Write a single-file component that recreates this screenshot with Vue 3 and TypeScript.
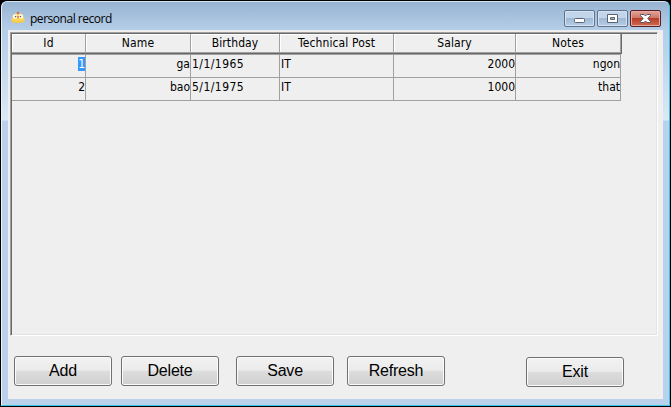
<script setup lang="ts">
interface PersonRecord {
  id: number
  name: string
  birthday: string
  post: string
  salary: number
  notes: string
}

const headers: string[] = ['Id', 'Name', 'Birthday', 'Technical Post', 'Salary', 'Notes']

const records: PersonRecord[] = [
  { id: 1, name: 'ga', birthday: '1/1/1965', post: 'IT', salary: 2000, notes: 'ngon' },
  { id: 2, name: 'bao', birthday: '5/1/1975', post: 'IT', salary: 1000, notes: 'that' },
]

const actions: string[] = ['Add', 'Delete', 'Save', 'Refresh']
</script>

<template>
  <div class="desktop">
    <div class="window">
      <header class="titlebar">
        <svg class="app-icon" width="14" height="14" viewBox="0 0 14 14">
          <path d="M5.8 3 L6 .8 L7 1.6 L8 .8 L8.2 3Z" fill="#e0554a" />
          <path d="M2 4 Q4.5 1.5 7 3 Q9.5 1.5 12 4 L13.6 8.5 Q14 12 7 12 Q0 12 .4 8.5Z" fill="#fbd65a" />
          <path d="M1 9 Q7 12 13 9 Q13 12 7 12 Q1 12 1 9Z" fill="#f6c445" />
          <circle cx="4.1" cy="5.5" r="2.2" fill="#fffdf3" />
          <circle cx="9.9" cy="5.5" r="2.2" fill="#fffdf3" />
          <circle cx="4.6" cy="5.6" r=".8" fill="#665b58" />
          <circle cx="9.4" cy="5.6" r=".8" fill="#665b58" />
          <path d="M6 5 H8 L7 8.5Z" fill="#e9783c" />
        </svg>
        <span class="title">personal record</span>
        <div class="controls">
          <span class="control">
            <svg width="29" height="15" viewBox="0 0 29 15">
              <rect x="9.5" y="7.5" width="10" height="4" rx="1" fill="#fff" stroke="#5a6170" />
            </svg>
          </span>
          <span class="control">
            <svg width="29" height="15" viewBox="0 0 29 15">
              <path d="M9.5 3.5 H19.5 V11.5 H9.5Z M12.5 6.5 V8.5 H16.5 V6.5Z" fill="#fff" fill-rule="evenodd" stroke="#5a6170" />
            </svg>
          </span>
          <span class="control close">
            <svg width="29" height="15" viewBox="0 0 29 15">
              <path d="M9.5 3.5 H13 L14.5 5 L16 3.5 H19.5 V4.5 L16.8 7.5 L19.5 10.5 V11.5 H16 L14.5 10 L13 11.5 H9.5 V10.5 L12.2 7.5 L9.5 4.5Z" fill="#fff" stroke="#575765" />
            </svg>
          </span>
        </div>
      </header>

      <main class="client">
        <section class="grid-frame">
          <div class="grid header">
            <div v-for="header in headers" :key="header" class="head-cell">{{ header }}</div>
          </div>
          <div class="rows">
            <div v-for="(record, index) in records" :key="record.id" class="grid row">
              <div class="cell num"><span :class="{ selected: index === 0 }">{{ record.id }}</span></div>
              <div class="cell num">{{ record.name }}</div>
              <div class="cell date">{{ record.birthday }}</div>
              <div class="cell">{{ record.post }}</div>
              <div class="cell num">{{ record.salary }}</div>
              <div class="cell num">{{ record.notes }}</div>
            </div>
          </div>
        </section>
        <footer class="actions">
          <button v-for="action in actions" :key="action" :class="action.toLowerCase()">{{ action }}</button>
          <button class="exit">Exit</button>
        </footer>
      </main>
    </div>
  </div>
</template>

<style>
body {
  background: #000;
  overflow: hidden;
}
</style>

<style scoped>
* {
  box-sizing: border-box;
}
.desktop {
  width: 671px;
  height: 407px;
  padding: 1px;
  background: #000;
}
.window {
  width: 669px;
  height: 405px;
  padding: 0 6px 6px;
  border: 1px solid #35c5e5;
  border-top-color: #d5e4f2;
  border-left-color: #e9f3fb;
  border-radius: 6px 6px 0 0;
  background:
    linear-gradient(#98b4d2 0, #b5cee8 28px, #bcd3eb 50px, #dce8f5 118px, transparent 119px) 0 0 / 100% 119px no-repeat,
    #b9d1ea;
}
.titlebar {
  display: flex;
  height: 28px;
  padding-left: 3px;
}
.app-icon {
  margin-top: 9px;
}
.title {
  margin: 8px 0 0 5px;
  font: 12px/18px "Open Sans", sans-serif;
  letter-spacing: -0.47px;
  color: #000;
}
.controls {
  display: flex;
  gap: 2px;
  margin: 8px 2px 0 auto;
}
.control {
  display: block;
  width: 31px;
  height: 17px;
  border: 1px solid #60738c;
  border-radius: 2px;
  background: linear-gradient(#c1d4e9 0 45%, #9db7d4 46%, #b7cde5);
  box-shadow: inset 0 0 0 1px #d4e2f1;
}
.control svg {
  display: block;
}
.close {
  border-color: #571e24;
  background: linear-gradient(#e2a499, #cf7768 45%, #b63a28 46%, #cf6a50);
  box-shadow: inset 0 0 0 1px #e6aaa0;
}
.client {
  width: 655px;
  height: 369px;
  padding: 2px 5px 0 2px;
  background: #efefef;
}
.grid-frame {
  width: 648px;
  height: 304px;
  border: 1px solid #fff;
  border-top-color: #a0a0a0;
  border-left-color: #a0a0a0;
  box-shadow: inset 1px 1px #696969, inset -1px -1px #e3e3e3;
  padding: 1px 0 0 1px;
  font: 12px/14px "DejaVu Sans Condensed", "DejaVu Sans", sans-serif;
  letter-spacing: 0.12px;
  color: #000;
}
.grid {
  display: grid;
  grid-template-columns: 74px 105px 89px 114px 122px 105px;
  width: 609px;
}
.header {
  width: 610px;
  height: 20px;
  border-right: 1px solid #696969;
  border-bottom: 1px solid #696969;
}
.head-cell {
  height: 19px;
  padding-top: 2px;
  text-align: center;
  border-right: 1px solid #a0a0a0;
  border-bottom: 1px solid #a0a0a0;
  box-shadow: inset 1px 1px #fff;
}
.rows {
  width: 609px;
  border-top: 1px solid #a0a0a0;
}
.row {
  height: 23px;
}
.cell {
  padding: 2px 0 0 1px;
  border-right: 1px solid #a0a0a0;
  border-bottom: 1px solid #a0a0a0;
  white-space: nowrap;
}
.num {
  text-align: right;
  letter-spacing: 0;
}
.date {
  letter-spacing: 0.45px;
}
.selected {
  display: inline-block;
  background: #3399ff;
  color: #fff;
}
.actions {
  display: flex;
  padding: 20px 0 0 4px;
}
button {
  width: 98px;
  height: 30px;
  padding: 0;
  border: 1px solid #707070;
  border-radius: 3px;
  background: linear-gradient(#f2f2f2, #ebebeb 48%, #dddddd 49%, #cfcfcf);
  box-shadow: inset 0 0 0 1px #fbfbfb;
  font: 16px/28px "Liberation Sans", Arial, sans-serif;
  letter-spacing: -0.2px;
  color: #000;
}
.delete {
  margin-left: 9px;
}
.save {
  margin-left: 17px;
}
.refresh {
  margin-left: 13px;
}
.exit {
  margin: 1px 0 0 81px;
}
</style>
